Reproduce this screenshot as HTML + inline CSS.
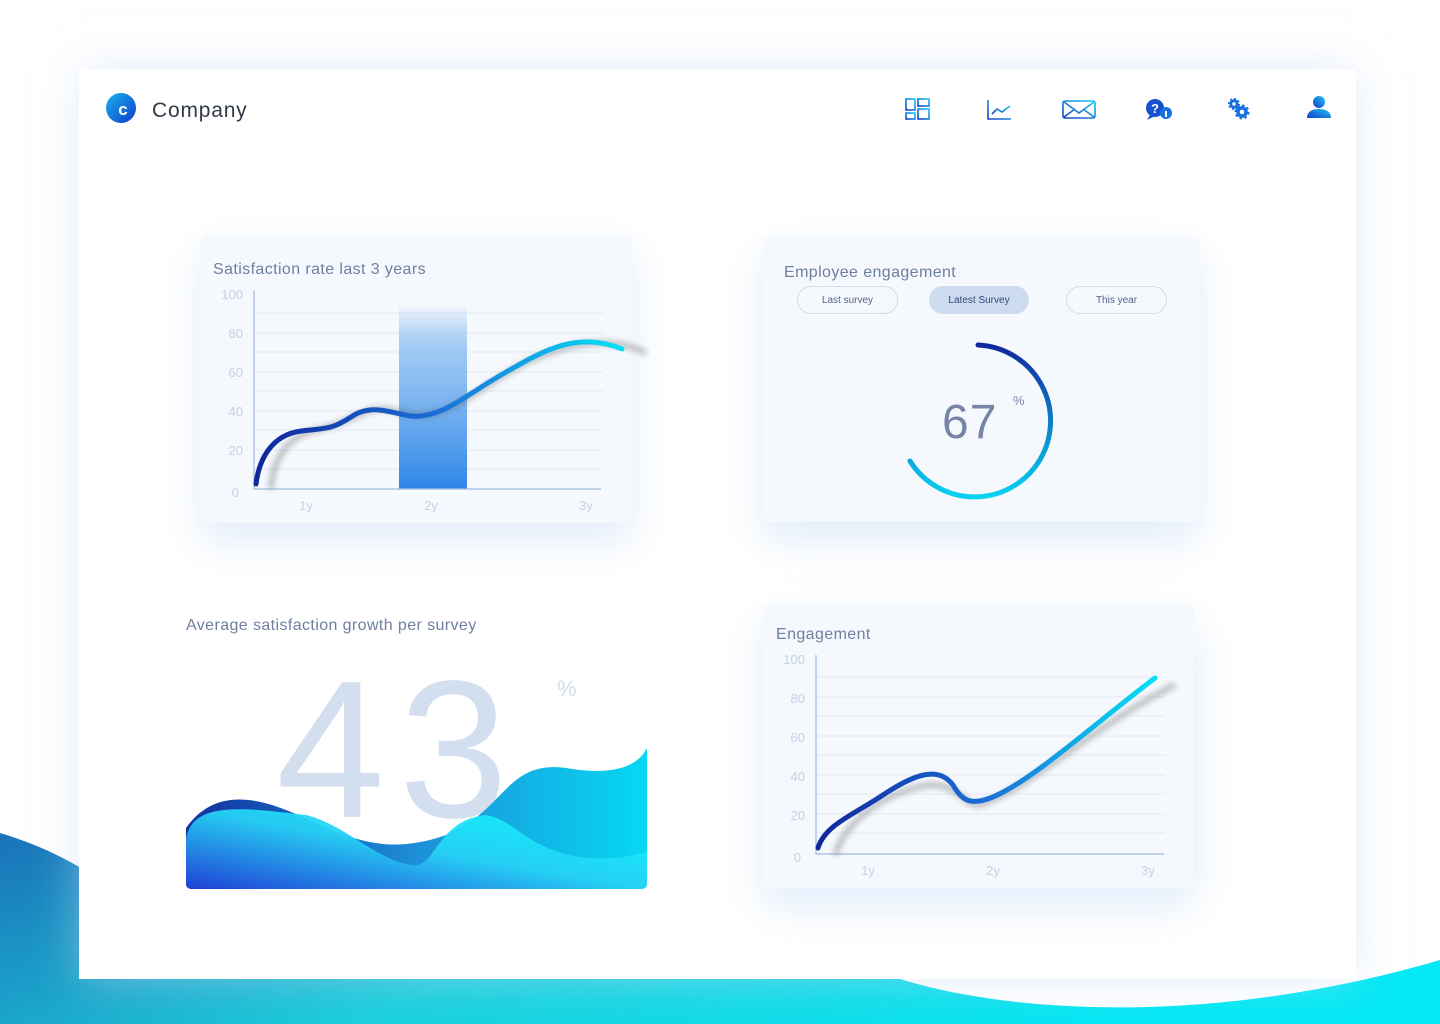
<!DOCTYPE html>
<html><head><meta charset="utf-8"><style>
*{margin:0;padding:0;box-sizing:border-box}
body{width:1440px;height:1024px;position:relative;overflow:hidden;background:#fff;font-family:"Liberation Sans",sans-serif;color:#6f7fa0}
.abs{position:absolute}
.panel{left:79px;top:69px;width:1277px;height:910px;background:#fff;box-shadow:0 0 40px rgba(200,220,245,.5)}
.card{background:#f5f8fd;border-radius:6px;box-shadow:0 18px 40px rgba(170,200,240,.35)}
.t{font-size:16px;color:#6f7fa0;letter-spacing:.4px}
.btn{height:28px;border:1px solid #cfdcec;border-radius:14px;font-size:10px;color:#52658a;text-align:center;line-height:28px}
</style></head><body>
<svg class="abs" style="left:0;top:0" width="1440" height="1024">
<defs><linearGradient id="bg" x1="0" y1="0" x2="1" y2="0.3"><stop offset="0" stop-color="#1a72b8"/><stop offset=".5" stop-color="#1ccfdc"/><stop offset="1" stop-color="#05e8f5"/></linearGradient></defs>
<path d="M0 833 C40 845 70 860 100 880 L100 979 L900 979 C1000 1010 1200 1030 1440 960 L1440 1024 L0 1024 Z" fill="url(#bg)"/>
</svg>
<div class="abs panel"></div>
<svg class="abs" style="left:106px;top:93px" width="32" height="30"><defs><linearGradient id="lg" x1="0" y1="0" x2="1" y2="1"><stop offset="0" stop-color="#1bb0f0"/><stop offset="1" stop-color="#0f3ec9"/></linearGradient></defs><circle cx="15" cy="15" r="15" fill="url(#lg)"/><text x="17" y="22" font-size="17" font-weight="bold" fill="#fff" text-anchor="middle" font-family="Liberation Sans">c</text></svg>
<div class="abs" style="left:152px;top:99px;font-size:21px;color:#333a46;letter-spacing:.8px">Company</div>
<svg class="abs" style="left:900px;top:92px" width="440" height="36" fill="none">
<defs><linearGradient id="ig" x1="0" y1="1" x2="1" y2="0"><stop offset="0" stop-color="#1540c8"/><stop offset="1" stop-color="#1cc6f5"/></linearGradient></defs>
<g stroke="url(#ig)" stroke-width="1.6"><rect x="6" y="7" width="9" height="11"/><rect x="18" y="7" width="11" height="7"/><rect x="6" y="21" width="9" height="6"/><rect x="18" y="17" width="11" height="10"/></g>
<g stroke="url(#ig)" stroke-width="1.6"><path d="M88 8 V27 H111"/><path d="M92 22 L97 17 L102 20 L110 14"/></g>
<g stroke="url(#ig)" stroke-width="1.6"><rect x="163" y="9" width="32" height="17" rx="2"/><path d="M164 10 L179 21 L194 10 M164 25 L175 17 M194 25 L183 17"/></g>
<g><circle cx="255" cy="16" r="9" fill="#1550d0"/><path d="M250 23 L247 28 L255 24 Z" fill="#1550d0"/><text x="255" y="21" font-size="13" font-weight="bold" fill="#fff" text-anchor="middle" font-family="Liberation Sans">?</text><circle cx="266" cy="21" r="6" fill="#1770e0"/><rect x="265" y="19" width="2" height="6" fill="#fff"/></g>
<g stroke="#1770e0"><circle cx="334" cy="12" r="3.2" stroke-width="3"/><circle cx="334" cy="12" r="5" stroke-width="2" stroke-dasharray="2 1.9"/><circle cx="342" cy="20" r="4" stroke-width="3.5"/><circle cx="342" cy="20" r="6.3" stroke-width="2.4" stroke-dasharray="2.5 2.4"/></g>
<g fill="url(#ig)"><circle cx="419" cy="10" r="6"/><path d="M407 26 C407 19 413 17 419 17 C425 17 431 19 431 26 Z"/></g>
</svg>

<!-- card 1 -->
<div class="abs card" style="left:201px;top:235px;width:431px;height:288px"></div>
<div class="abs t" style="left:213px;top:261px">Satisfaction rate last 3 years</div>
<svg class="abs" style="left:201px;top:235px" width="460" height="290">
<defs><linearGradient id="bar" x1="0" y1="0" x2="0" y2="1"><stop offset="0" stop-color="#2e86e8" stop-opacity="0"/><stop offset=".25" stop-color="#64a9ee" stop-opacity=".6"/><stop offset="1" stop-color="#2e86e8"/></linearGradient>
<linearGradient id="c1" x1="0" y1="0" x2="1" y2="0"><stop offset="0" stop-color="#10279a"/><stop offset=".5" stop-color="#1b70d8"/><stop offset="1" stop-color="#06e0f5"/></linearGradient>
<filter id="bl"><feGaussianBlur stdDeviation="3"/></filter></defs>
<g stroke="#e2eaf5" stroke-width="1"><path d="M54 78H402M54 98H402M54 117H402M54 137H402M54 156H402M54 176H402M54 195H402M54 215H402M54 234H402"/></g>
<rect x="198" y="70" width="68" height="184" fill="url(#bar)"/>
<path d="M53 55V254H400" stroke="#9fbbe0" stroke-width="1.2" fill="none"/>
<path d="M70 254 C72 220 90 200 115 195 C140 190 150 182 170 175 C190 170 205 182 225 180 C260 175 280 150 330 125 C370 108 410 100 445 118" stroke="#555" stroke-width="6" fill="none" opacity=".35" filter="url(#bl)"/>
<path d="M55 249 C58 225 70 200 100 196 C125 193 130 195 150 182 C170 168 190 178 210 181 C240 184 265 160 300 140 C340 117 375 95 421 114" stroke="url(#c1)" stroke-width="5" stroke-linecap="round" fill="none"/>
<g font-size="13" fill="#c3d2e6" font-family="Liberation Sans" text-anchor="end"><text x="42" y="64">100</text><text x="42" y="103">80</text><text x="42" y="142">60</text><text x="42" y="181">40</text><text x="42" y="220">20</text><text x="38" y="262">0</text></g>
<g font-size="13" fill="#c3d2e6" font-family="Liberation Sans" text-anchor="middle"><text x="105" y="275">1y</text><text x="230" y="275">2y</text><text x="385" y="275">3y</text></g>
</svg>

<!-- card 2 -->
<div class="abs card" style="left:763px;top:237px;width:436px;height:285px"></div>
<div class="abs t" style="left:784px;top:264px">Employee engagement</div>
<div class="abs btn" style="left:797px;top:286px;width:101px">Last survey</div>
<div class="abs btn" style="left:929px;top:286px;width:100px;background:#cddbee;color:#2f4a7a">Latest Survey</div>
<div class="abs btn" style="left:1066px;top:286px;width:101px">This year</div>
<svg class="abs" style="left:890px;top:330px" width="180" height="180">
<defs><linearGradient id="c2" x1="0" y1="0" x2="0" y2="1"><stop offset="0" stop-color="#10289e"/><stop offset="1" stop-color="#08d2f2"/></linearGradient></defs>
<path d="M88 15 A76 76 0 1 1 20 131" stroke="url(#c2)" stroke-width="5" stroke-linecap="round" fill="none"/>
</svg>
<div class="abs" style="left:942px;top:395px;font-size:48px;color:#7684a6;letter-spacing:1px">67</div>
<div class="abs" style="left:1013px;top:393px;font-size:13px;color:#7684a6">%</div>

<!-- card 3 -->
<div class="abs t" style="left:186px;top:617px">Average satisfaction growth per survey</div>
<div class="abs" style="left:276px;top:652px;font-size:196px;color:#d3dfee;line-height:1;letter-spacing:14px">43</div>
<div class="abs" style="left:557px;top:676px;font-size:22px;color:#cfdcec">%</div>
<svg class="abs" style="left:186px;top:740px" width="461" height="150">
<defs><linearGradient id="w1" x1="0" y1="0" x2="1" y2="0"><stop offset="0" stop-color="#12309e"/><stop offset=".5" stop-color="#1d8fd8"/><stop offset="1" stop-color="#06d8f2"/></linearGradient>
<linearGradient id="w2" x1="0" y1="1" x2="1" y2="0"><stop offset="0" stop-color="#2040d8"/><stop offset=".5" stop-color="#27d0f5"/><stop offset="1" stop-color="#0cfbff"/></linearGradient>
<clipPath id="rc"><rect width="461" height="149" rx="5"/></clipPath></defs>
<g clip-path="url(#rc)">
<path d="M0 88 C20 60 50 50 100 70 C150 90 190 120 260 95 C320 70 320 20 380 28 C420 35 450 30 461 8 L461 150 L0 150Z" fill="url(#w1)"/>
<path d="M0 100 C5 60 60 68 120 75 C160 85 190 120 225 125 C250 130 250 80 300 75 C330 80 340 110 400 118 C430 120 450 115 461 112 L461 150 L0 150Z" fill="url(#w2)" opacity=".95"/>
</g></svg>

<!-- card 4 -->
<div class="abs card" style="left:763px;top:605px;width:431px;height:283px"></div>
<div class="abs t" style="left:776px;top:626px">Engagement</div>
<svg class="abs" style="left:763px;top:605px" width="440" height="290">
<defs><linearGradient id="c4" x1="0" y1="0" x2="1" y2="0"><stop offset="0" stop-color="#10279a"/><stop offset=".5" stop-color="#1b70d8"/><stop offset="1" stop-color="#06e0f5"/></linearGradient></defs>
<g stroke="#e2eaf5"><path d="M54 72H402M54 92H402M54 111H402M54 131H402M54 150H402M54 170H402M54 189H402M54 209H402M54 228H402"/></g>
<path d="M53 50V249H401" stroke="#9fbbe0" stroke-width="1.2" fill="none"/>
<path d="M72 250 C85 210 130 185 165 180 C195 178 200 200 215 200 C260 190 330 120 412 80" stroke="#555" stroke-width="6" fill="none" opacity=".35" filter="url(#bl)"/>
<path d="M55 243 C62 220 90 210 120 190 C150 170 175 160 190 180 C200 198 210 200 230 192 C270 175 330 120 392 73" stroke="url(#c4)" stroke-width="5" stroke-linecap="round" fill="none"/>
<g font-size="13" fill="#c3d2e6" font-family="Liberation Sans" text-anchor="end"><text x="42" y="59">100</text><text x="42" y="98">80</text><text x="42" y="137">60</text><text x="42" y="176">40</text><text x="42" y="215">20</text><text x="38" y="257">0</text></g>
<g font-size="13" fill="#c3d2e6" font-family="Liberation Sans" text-anchor="middle"><text x="105" y="270">1y</text><text x="230" y="270">2y</text><text x="385" y="270">3y</text></g>
</svg>
</body></html>
